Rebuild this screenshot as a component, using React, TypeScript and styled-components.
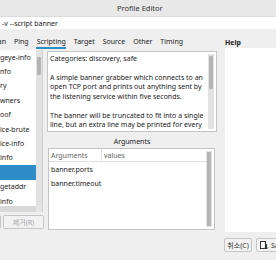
import styled, { createGlobalStyle } from 'styled-components'

const GlobalStyle = createGlobalStyle`
  html, body {
    margin: 0;
    padding: 0;
    background: #efefef;
  }
  body {
    font-family: "Noto Sans", "Noto Sans CJK KR", sans-serif;
    font-size: 7px;
    color: #222;
  }
`

const Window = styled.div`
  width: 276px;
  height: 260px;
  overflow: hidden;
  display: flex;
  flex-direction: column;
  background: #efefef;
`

const TitleBar = styled.div`
  height: 16px;
  flex: none;
  background: #e8e8e8;
  border-bottom: 1px solid #dcdcdc;
  display: flex;
  align-items: center;
  padding-left: 117px;
  font-size: 7.5px;
  color: #333;
`

const CommandField = styled.div`
  height: 12px;
  flex: none;
  background: #fff;
  display: flex;
  align-items: center;
  padding-left: 2px;
  color: #222;
`

const Main = styled.div`
  display: flex;
  margin-top: 7px;
  height: 196px;
`

const TabWidget = styled.div`
  width: 218px;
  flex: none;
  display: flex;
  flex-direction: column;
  overflow: hidden;
`

const TabBar = styled.div`
  height: 13px;
  display: flex;
  gap: 7px;
  align-items: stretch;
  margin-left: -10px;
`

const Tab = styled.div<{ $active?: boolean }>`
  display: flex;
  align-items: center;
  padding: 0 0.5px;
  border-bottom: 2px solid ${p => (p.$active ? '#308cc6' : 'transparent')};
  color: #222;
  white-space: nowrap;
`

const TabPage = styled.div`
  flex: 1;
  display: flex;
  gap: 4px;
  padding-top: 1px;
`

const ScriptColumn = styled.div`
  width: 43px;
  flex: none;
  display: flex;
  flex-direction: column;
`

const ScriptList = styled.div`
  height: 162px;
  display: grid;
  grid-template-columns: 1fr 6px;
  grid-template-rows: 1fr 6px;
  background: #fff;
  border-right: 1px solid #d0d0d0;
`

const ListItems = styled.div`
  overflow: hidden;
`

const ListItem = styled.div<{ $selected?: boolean }>`
  height: 14.4px;
  display: flex;
  align-items: center;
  white-space: nowrap;
  background: ${p => (p.$selected ? '#308cc6' : 'transparent')};
  color: ${p => (p.$selected ? '#fff' : '#222')};
`

const VScroll = styled.div<{ $top: number; $len: number }>`
  position: relative;
  background: #e2e2e2;
  &::after {
    content: '';
    position: absolute;
    left: 1px;
    right: 1px;
    top: ${p => p.$top}px;
    height: ${p => p.$len}px;
    background: #b4b4b4;
    border-radius: 1px;
  }
`

const HScroll = styled.div`
  background: #d8d8d8;
`

const Corner = styled.div`
  background: #e6e6e6;
`

const ButtonRow = styled.div`
  display: flex;
  gap: 2px;
  margin-top: 3px;
  margin-left: -39px;
`

const Button = styled.button<{ $disabled?: boolean; $width?: number }>`
  height: 14px;
  width: ${p => (p.$width ? `${p.$width}px` : 'auto')};
  flex: none;
  padding: 0 3px;
  display: flex;
  align-items: center;
  justify-content: center;
  gap: 2px;
  font-family: "Noto Sans", "Noto Sans CJK KR", sans-serif;
  font-size: 7px;
  color: ${p => (p.$disabled ? '#a8a8a8' : '#333')};
  background: #f2f2f2;
  border: 1px solid #c6c6c6;
  border-radius: 2px;
  white-space: nowrap;
  overflow: hidden;
`

const DetailColumn = styled.div`
  width: 170px;
  flex: none;
  display: flex;
  flex-direction: column;
  padding-top: 1px;
`

const DescBox = styled.div`
  height: 81px;
  display: flex;
  background: #fff;
  border: 1px solid #c4c4c4;
  box-sizing: border-box;
  overflow: hidden;
`

const DescText = styled.div`
  flex: 1;
  height: 79px;
  overflow: hidden;
  padding: 1.5px 4px 0 2px;
  line-height: 9.5px;
  p {
    margin: 0 0 9.5px;
  }
`

const InnerScroll = styled(VScroll)`
  width: 6px;
  margin: 2px 2px 2px 0;
  flex: none;
`

const GroupLabel = styled.div`
  height: 16px;
  padding-top: 2px;
  box-sizing: border-box;
  display: flex;
  align-items: center;
  justify-content: center;
  color: #222;
`

const ArgsTable = styled.div`
  height: 82px;
  margin-left: 1px;
  margin-right: 2px;
  display: flex;
  background: #fff;
  border: 1px solid #c4c4c4;
  box-sizing: border-box;
`

const TableBody = styled.div`
  flex: 1;
  display: flex;
  flex-direction: column;
`

const HeaderRow = styled.div`
  height: 12px;
  display: grid;
  grid-template-columns: 52px 1fr;
  border-bottom: 1px solid #e0e0e0;
  color: #666;
`

const HeaderCell = styled.div`
  display: flex;
  align-items: center;
  padding-left: 2px;
  & + & {
    border-left: 1px solid #e0e0e0;
  }
`

const Row = styled.div`
  height: 14px;
  display: flex;
  align-items: center;
  padding-left: 2px;
  &:first-of-type {
    margin-top: 1px;
  }
`

const HelpPane = styled.div`
  flex: 1;
  margin-left: 7px;
  display: flex;
  flex-direction: column;
`

const HelpLabel = styled.div`
  height: 12px;
  display: flex;
  align-items: center;
  font-weight: bold;
`

const HelpBox = styled.div`
  height: 184px;
  background: #fff;
`

const Footer = styled.div`
  display: flex;
  gap: 4px;
  padding-left: 224px;
  margin-top: 6px;
`

const DocIcon = () => (
  <svg width="9" height="9" viewBox="0 0 9 9">
    <rect x="0.5" y="0.5" width="5" height="7" fill="#fff" stroke="#333" />
    <path d="M6.5 3v5M5 6.5l1.5 1.5 1.5-1.5" stroke="#333" fill="none" />
  </svg>
)

const scripts = ['geye-info', 'nfo', 'ry', 'wners', 'oof', 'ice-brute', 'ice-info', 'info', '', 'getaddr', 'info']

export default function App() {
  return (
    <>
      <GlobalStyle />
      <Window>
        <TitleBar>Profile Editor</TitleBar>
        <CommandField>-v --script banner</CommandField>
        <Main>
          <TabWidget>
            <TabBar>
              <Tab>Scan</Tab>
              <Tab>Ping</Tab>
              <Tab $active>Scripting</Tab>
              <Tab>Target</Tab>
              <Tab>Source</Tab>
              <Tab>Other</Tab>
              <Tab>Timing</Tab>
            </TabBar>
            <TabPage>
              <ScriptColumn>
                <ScriptList>
                  <ListItems>
                    {scripts.map((s, i) => (
                      <ListItem key={i} $selected={i === 8}>{s}</ListItem>
                    ))}
                  </ListItems>
                  <VScroll $top={7} $len={18} />
                  <HScroll />
                  <Corner />
                </ScriptList>
                <ButtonRow>
                  <Button $width={40} aria-label="추가" />
                  <Button $disabled $width={41}>제거(R)</Button>
                </ButtonRow>
              </ScriptColumn>
              <DetailColumn>
                <DescBox>
                  <DescText>
                    <p>Categories: discovery, safe</p>
                    <p>
                      A simple banner grabber which connects to an open TCP port and prints out anything sent by the
                      listening service within five seconds.
                    </p>
                    <p>
                      The banner will be truncated to fit into a single line, but an extra line may be printed for every
                      increase in the level of verbosity requested.
                    </p>
                  </DescText>
                  <InnerScroll $top={2} $len={33} />
                </DescBox>
                <GroupLabel>Arguments</GroupLabel>
                <ArgsTable>
                  <TableBody>
                    <HeaderRow>
                      <HeaderCell>Arguments</HeaderCell>
                      <HeaderCell>values</HeaderCell>
                    </HeaderRow>
                    <Row>banner.ports</Row>
                    <Row>banner.timeout</Row>
                  </TableBody>
                  <InnerScroll $top={1} $len={74} />
                </ArgsTable>
              </DetailColumn>
            </TabPage>
          </TabWidget>
          <HelpPane>
            <HelpLabel>Help</HelpLabel>
            <HelpBox />
          </HelpPane>
        </Main>
        <Footer>
          <Button $width={28}>취소(C)</Button>
          <Button>
            <DocIcon />
            Save
          </Button>
        </Footer>
      </Window>
    </>
  )
}
